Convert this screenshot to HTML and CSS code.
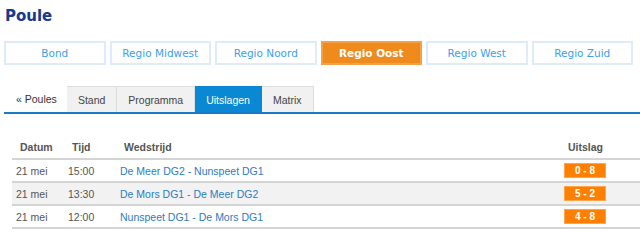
FILE: index.html
```html
<!DOCTYPE html>
<html lang="nl">
<head>
  <meta charset="UTF-8" />
  <meta name="viewport" content="width=device-width, initial-scale=1.0"/>
  <title>Poule</title>
  <link rel="stylesheet" href="styles.css">
</head>
<body>
  <h1 class="page-title">Poule</h1>

  <div class="regions">
    <a class="region" href="#">Bond</a>
    <a class="region" href="#">Regio Midwest</a>
    <a class="region" href="#">Regio Noord</a>
    <a class="region active" href="#">Regio Oost</a>
    <a class="region" href="#">Regio West</a>
    <a class="region" href="#">Regio Zuid</a>
  </div>

  <div class="tabs">
    <a class="tab back" href="#">&laquo; Poules</a>
    <a class="tab" href="#">Stand</a>
    <a class="tab" href="#">Programma</a>
    <a class="tab active" href="#">Uitslagen</a>
    <a class="tab" href="#">Matrix</a>
  </div>

  <table class="results">
    <colgroup>
      <col class="col-date">
      <col class="col-time">
      <col class="col-match">
      <col class="col-score">
      <col>
    </colgroup>
    <thead>
      <tr>
        <th>Datum</th>
        <th>Tijd</th>
        <th>Wedstrijd</th>
        <th>Uitslag</th>
        <th></th>
      </tr>
    </thead>
    <tbody>
      <tr>
        <td>21 mei</td>
        <td>15:00</td>
        <td><a href="#">De Meer DG2 - Nunspeet DG1</a></td>
        <td><span class="score">0 - 8</span></td>
        <td></td>
      </tr>
      <tr>
        <td>21 mei</td>
        <td>13:30</td>
        <td><a href="#">De Mors DG1 - De Meer DG2</a></td>
        <td><span class="score">5 - 2</span></td>
        <td></td>
      </tr>
      <tr>
        <td>21 mei</td>
        <td>12:00</td>
        <td><a href="#">Nunspeet DG1 - De Mors DG1</a></td>
        <td><span class="score">4 - 8</span></td>
        <td></td>
      </tr>
    </tbody>
  </table>
</body>
</html>
```

FILE: styles.css
```css
body {
  margin: 0;
  padding: 0 0 0 4px;
  background-color: #ffffff;
  font-family: "Liberation Sans", Arial, sans-serif;
  overflow: hidden;
}

.page-title {
  margin: 0;
  padding: 7px 0 0 1px;
  height: 34px;
  box-sizing: border-box;
  font-family: "DejaVu Sans", Verdana, sans-serif;
  font-size: 15px;
  font-weight: bold;
  color: #17398f;
}

.regions {
  display: grid;
  grid-template-columns: repeat(6, 1fr);
  gap: 4px;
  width: 629px;
  margin-top: 7px;
}

.region {
  display: flex;
  align-items: center;
  justify-content: center;
  height: 24px;
  box-sizing: border-box;
  border: 2px solid #deebf8;
  font-family: "DejaVu Sans", Verdana, sans-serif;
  font-size: 10.5px;
  color: #3a9ff0;
  text-decoration: none;
}

.region.active {
  background-color: #ef8a1c;
  border-color: #f4a14a;
  color: #ffffff;
  font-weight: bold;
}

.tabs {
  display: flex;
  margin-top: 21px;
  border-bottom: 2px solid #1b7bc2;
}

.tab {
  display: flex;
  align-items: center;
  height: 26px;
  padding: 0 11px;
  box-sizing: border-box;
  border: 1px solid #dddddd;
  border-bottom: none;
  background-color: #f1f1f1;
  font-size: 10.5px;
  color: #444444;
  text-decoration: none;
}

.tab + .tab {
  border-left: none;
}

.tab.back {
  border: none;
  background: none;
  padding: 0 10px 0 12px;
  color: #333333;
}

.tab.active {
  background-color: #0b88d3;
  border-color: #0b88d3;
  color: #ffffff;
}

.results {
  width: 628px;
  margin: 22px 0 0 8px;
  border-collapse: collapse;
  table-layout: fixed;
  font-size: 10.5px;
  color: #555555;
}

.col-date,
.col-time {
  width: 52px;
}

.col-match {
  width: 444px;
}

.col-score {
  width: 50px;
}

.results th {
  height: 22px;
  padding: 0 0 0 8px;
  text-align: left;
  font-weight: bold;
  border-bottom: 2px solid #d4d4d4;
}

.results td {
  height: 21px;
  padding: 0 0 0 4px;
  border-bottom: 2px solid #d4d4d4;
}

.results tbody tr:nth-child(even) {
  background-color: #f2f2f2;
}

.results a {
  color: #2c7cbf;
  text-decoration: none;
}

.score {
  display: inline-block;
  width: 42px;
  height: 15px;
  line-height: 13px;
  box-sizing: border-box;
  border: 1px solid #ffa54d;
  background-color: #ff8000;
  color: #ffffff;
  font-size: 10px;
  font-weight: bold;
  text-align: center;
  vertical-align: middle;
}
```
